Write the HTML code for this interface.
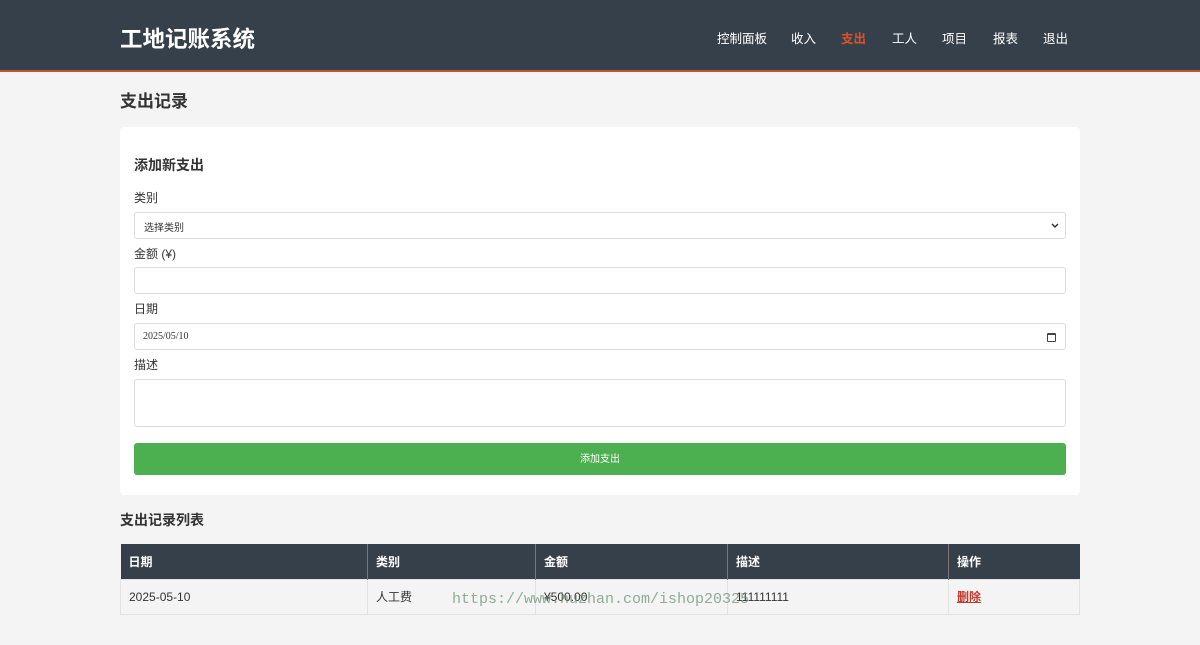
<!DOCTYPE html>
<html><head><meta charset="utf-8"><style>
*{box-sizing:border-box;margin:0;padding:0}
body{width:1200px;height:645px;background:#f4f4f4;font-family:"Liberation Sans","Noto Sans CJK SC",sans-serif;color:#333;position:relative;overflow:hidden}
.a{position:absolute}
.hdr{left:0;top:0;width:1200px;background:#36404a;border-bottom:2px solid #c0552f;height:72px}
.nav{color:#fff;font-size:12.5px;top:28px}
.lbl{font-size:12px;color:#333;left:134px}
.inp{left:134px;width:932px;background:#fff;border:1px solid #ddd;border-radius:3px}
th,td{font-size:12px;text-align:left;padding-left:8px}
</style></head><body>
<div class="a hdr"></div>
<div class="a" style="left:120px;top:22px;font-size:22.5px;font-weight:bold;color:#fff">工地记账系统</div>
<div class="a nav" style="left:717px">控制面板</div>
<div class="a nav" style="left:791px">收入</div>
<div class="a nav" style="left:841px;color:#d9512c;font-weight:bold">支出</div>
<div class="a nav" style="left:892px">工人</div>
<div class="a nav" style="left:942px">项目</div>
<div class="a nav" style="left:993px">报表</div>
<div class="a nav" style="left:1043px">退出</div>
<div class="a" style="left:120px;top:87px;font-size:17px;font-weight:bold;color:#333">支出记录</div>
<div class="a" style="left:120px;top:127px;width:960px;height:368px;background:#fff;border-radius:4px"></div>
<div class="a" style="left:134px;top:155px;font-size:14px;font-weight:bold">添加新支出</div>
<div class="a lbl" style="top:189px">类别</div>
<div class="a inp" style="top:212px;height:27px;font-size:10px;padding:6px 9px">选择类别<svg class="a" style="right:6px;top:10px" width="8" height="6" viewBox="0 0 8 6"><path d="M1 1L4 4L7 1" stroke="#333" stroke-width="1.5" fill="none"/></svg></div>
<div class="a lbl" style="top:245px">金额 (¥)</div>
<div class="a inp" style="top:267px;height:27px"></div>
<div class="a lbl" style="top:300px">日期</div>
<div class="a inp" style="top:323px;height:27px;font-size:10px;padding:7px 8px;font-family:'Liberation Serif',serif">2025/05/10<div class="a" style="right:9px;top:9px;width:9px;height:9px;border:1.5px solid #444;border-top-width:2.5px;border-radius:1px"></div></div>
<div class="a lbl" style="top:356px">描述</div>
<div class="a inp" style="top:379px;height:48px"></div>
<div class="a" style="left:134px;top:443px;width:932px;height:32px;background:#4caf50;border-radius:3px;color:#fff;font-size:10px;text-align:center;line-height:33px">添加支出</div>
<div class="a" style="left:120px;top:510px;font-size:14px;font-weight:bold">支出记录列表</div>
<table class="a" style="left:120px;top:544px;width:960px;border-collapse:collapse">
<tr style="background:#36404a;color:#fff;height:35px"><th style="width:247px;border-right:1px solid #777">日期</th><th style="width:168px;border-right:1px solid #777">类别</th><th style="width:192px;border-right:1px solid #777">金额</th><th style="width:221px;border-right:1px solid #777">描述</th><th>操作</th></tr>
<tr style="height:35px;background:#f4f4f4"><td style="border:1px solid #e2e2e2">2025-05-10</td><td style="border:1px solid #e2e2e2">人工费</td><td style="border:1px solid #e2e2e2">¥500.00</td><td style="border:1px solid #e2e2e2">111111111</td><td style="border:1px solid #e2e2e2;color:#c0392b;text-decoration:underline;font-weight:bold">删除</td></tr>
</table>
<div class="a" style="left:452px;top:591px;font-family:'Liberation Mono',monospace;font-size:15px;color:rgba(100,140,110,0.7)">https://www.huzhan.com/ishop20325</div>
</body></html>
